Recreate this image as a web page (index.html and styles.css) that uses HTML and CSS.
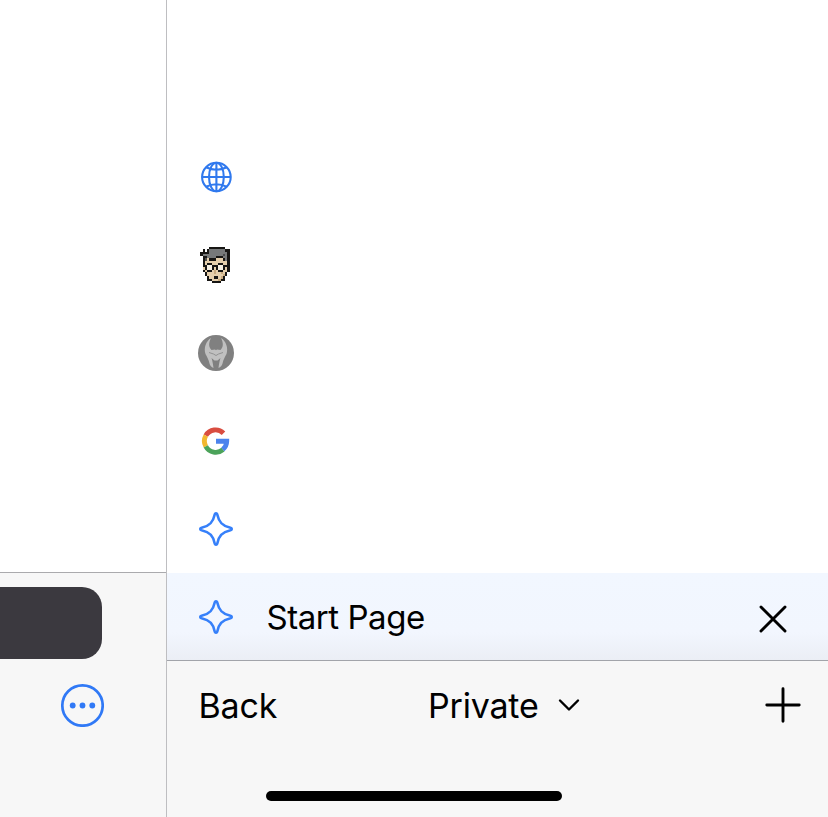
FILE: index.html
```html
<!DOCTYPE html>
<html lang="en">
<head>
<meta charset="utf-8">
<title>Start Page</title>
<link rel="stylesheet" href="styles.css">
</head>
<body>
<div class="screen">
  <section class="page">
    <div class="page-body"></div>
    <div class="page-bar">
      <div class="address"></div>
      <svg class="more" viewBox="0 0 44 44"><circle cx="22.5" cy="22.5" r="20.2" fill="none" stroke="#3079f6" stroke-width="2.7"/><g fill="#3079f6"><circle cx="12.700" cy="22.500" r="2.900"/><circle cx="22.500" cy="22.500" r="2.900"/><circle cx="32.300" cy="22.500" r="2.900"/></g></svg>
    </div>
  </section>
  <section class="tabs">
    <ul class="list">
      <li class="row"><svg class="icon" viewBox="0 0 36 36"><g fill="none" stroke="#3079ee" stroke-width="2.1"><circle cx="18.4" cy="18" r="14.3"/><ellipse cx="18.4" cy="18" rx="7.4" ry="14.3"/><path d="M18.4 3.5v29M3.9 18h29M8 8.2q10.4 5 20.8 0M8 27.8q10.4-5 20.8 0"/></g></svg></li>
      <li class="row"><svg class="icon" id="face" viewBox="0 0 16 16" shape-rendering="crispEdges"></svg></li>
      <li class="row"><svg class="icon" viewBox="0 0 36 36"><circle cx="18" cy="18" r="18" fill="#808080"/><path fill="#c0c0c0" d="M13 3C8 6 5.500 13 7.500 19c1.500 3 3 5 4 9.500.5 2 2 4 4 4.500-.5-4-1-7-2-10l3 2.500h3l3-2.500c-1 3-1.500 6-2 10 2-.5 3.500-2.500 4-4.500 1-4.500 2.500-6.500 4-9.500 2-6-.5-13-5.500-16 2.500 5 2.500 9-.5 12l-3.500-.5-1 .7-1-.7-3.500.5c-3-3-3-7-.5-12Z"/><path d="M11 17.500l4.500 1.500 2.500 1.500 2.500-1.500 4.500-1.500" fill="none" stroke="#929292" stroke-width="1"/></svg></li>
      <li class="row"><svg class="icon" viewBox="0 0 36 36"><g fill="none" stroke-width="4.900"><path d="M7.800 12.600A11.100 11.100 0 0 1 25.500 10.300" stroke="#d94d40"/><path d="M7.800 23.400A11.300 11.300 0 0 1 7.800 12.600" stroke="#f2b72f"/><path d="M25 26.700A11.300 11.300 0 0 1 7.800 23.400" stroke="#4ba35a"/><path d="M18 18.300h10.700A11 11 0 0 1 24.800 26.500" stroke="#4b83ed"/></g></svg></li>
      <li class="row"><svg class="icon" viewBox="0 0 36 36"><path class="star" d="M18 2.300c1.100 0 1.300 1 1.500 2 1.500 7.200 4.800 10.700 12.200 12.200 1 .2 2 .5 2 1.500s-1 1.300-2 1.500c-7.400 1.500-10.700 5-12.200 12.200-.2 1-.4 2-1.500 2s-1.300-1-1.500-2c-1.500-7.200-4.800-10.700-12.200-12.200-1-.2-2-.5-2-1.500s1-1.300 2-1.500c7.400-1.500 10.700-5 12.200-12.200.2-1 .4-2 1.500-2Z"/></svg></li>
      <li class="row selected"><svg class="icon" viewBox="0 0 36 36"><path class="star" d="M18 2.300c1.100 0 1.300 1 1.500 2 1.500 7.200 4.800 10.700 12.200 12.200 1 .2 2 .5 2 1.500s-1 1.300-2 1.500c-7.400 1.500-10.700 5-12.200 12.200-.2 1-.4 2-1.500 2s-1.300-1-1.500-2c-1.500-7.200-4.800-10.700-12.200-12.200-1-.2-2-.5-2-1.500s1-1.300 2-1.500c7.400-1.500 10.700-5 12.200-12.200.2-1 .4-2 1.500-2Z"/></svg><span class="title">Start Page</span><svg class="close" viewBox="0 0 30 30"><path d="M3 3l24 24M27 3L3 27"/></svg></li>
    </ul>
    <div class="toolbar">
      <div class="actions">
        <span class="back">Back</span>
        <span class="group">Private</span>
        <svg class="chevron" viewBox="0 0 24 16"><path d="M3 3.500l9 9 9-9"/></svg>
        <svg class="plus" viewBox="0 0 36 36"><path d="M18 1.800v32.400M1.800 18h32.400"/></svg>
      </div>
    </div>
  </section>
  <div class="home"></div>
</div>
<script src="script.js"></script>
</body>
</html>
```
FILE: styles.css
```css
* { box-sizing: border-box; }
body { margin: 0; background: #fff; color: #000; font-family: Inter, "Liberation Sans", sans-serif; }
.screen { position: relative; display: flex; width: 828px; height: 817px; overflow: hidden; }
.page { display: flex; flex-direction: column; width: 167px; border-right: 1px solid #bebec1; }
.page-body { height: 572px; }
.page-bar { flex: 1; padding-top: 14px; border-top: 1px solid #aaaaad; background: #f7f7f7; }
.address { width: 102px; height: 72px; border-radius: 0 20px 20px 0; background: #3b393f; }
.more { display: block; width: 44px; height: 44px; margin: 24px 0 0 60px; }
.tabs { display: flex; flex-direction: column; width: 661px; }
.list { height: 660px; margin: 0; padding: 133px 0 0; list-style: none; }
.row { display: flex; align-items: center; height: 88px; padding: 0 40px 0 31px; }
.row.selected { height: 87px; background: linear-gradient(#f2f7ff 0, #f2f6fe 68%, #ebeef5 100%); }
.icon { width: 36px; height: 36px; flex: none; }
.star { fill: none; stroke: #3680fa; stroke-width: 2.600; stroke-linejoin: round; }
.title { margin-left: 32.500px; font-size: 33px; letter-spacing: -0.450px; white-space: nowrap; }
.close { width: 30px; height: 30px; margin: 4px 0 0 auto; }
.close path, .plus path, .chevron path { fill: none; stroke: #000; stroke-width: 2.900; stroke-linecap: round; }
.toolbar { flex: 1; border-top: 1px solid #a2a4aa; background: #f7f7f7; }
.actions { display: flex; align-items: center; height: 88px; padding: 0 27px 0 31.500px; font-size: 34px; letter-spacing: -0.200px; }
.back { width: 229.500px; }
.chevron { width: 24px; height: 16px; margin-left: 18px; }
.chevron path { stroke-width: 2.400; stroke-linejoin: round; }
.plus { width: 36px; height: 36px; margin: -1px 0 0 auto; }
.home { position: absolute; left: 266px; top: 791px; width: 296px; height: 10px; border-radius: 5px; background: #000; }
```
FILE: script.js
```js
// Pixel portrait: one character per cell of a 16 by 16 grid.
const rows = [
  ".....#######....",
  "..#.#ggggggg##..",
  ".####gggggggg#..",
  ".#gggggggggGg#..",
  "..##gggg###gg#..",
  "..#Gs###sss#g#..",
  "..#ssssssssss#..",
  "..#s##sss##ss#..",
  "..##ww###ww###..",
  "..s#ww#s#ww#s#..",
  "..#s##sSs##ss#..",
  "...#sssSssSs#...",
  "...#sssssssS#...",
  "....#ss##sS#....",
  "....##sssS##....",
  "......####......"
];
const colors = { "#": "#171614", g: "#77797a", G: "#4b4c4d", s: "#e5cfac", S: "#c9ab80", w: "#f7f1e4" };
const face = document.getElementById("face");
rows.forEach((line, y) => [...line].forEach((cell, x) => {
  if (!colors[cell]) return;
  const r = document.createElementNS("http://www.w3.org/2000/svg", "rect");
  r.setAttribute("x", x);
  r.setAttribute("y", y);
  r.setAttribute("width", 1);
  r.setAttribute("height", 1);
  r.setAttribute("fill", colors[cell]);
  face.append(r);
}));
```
